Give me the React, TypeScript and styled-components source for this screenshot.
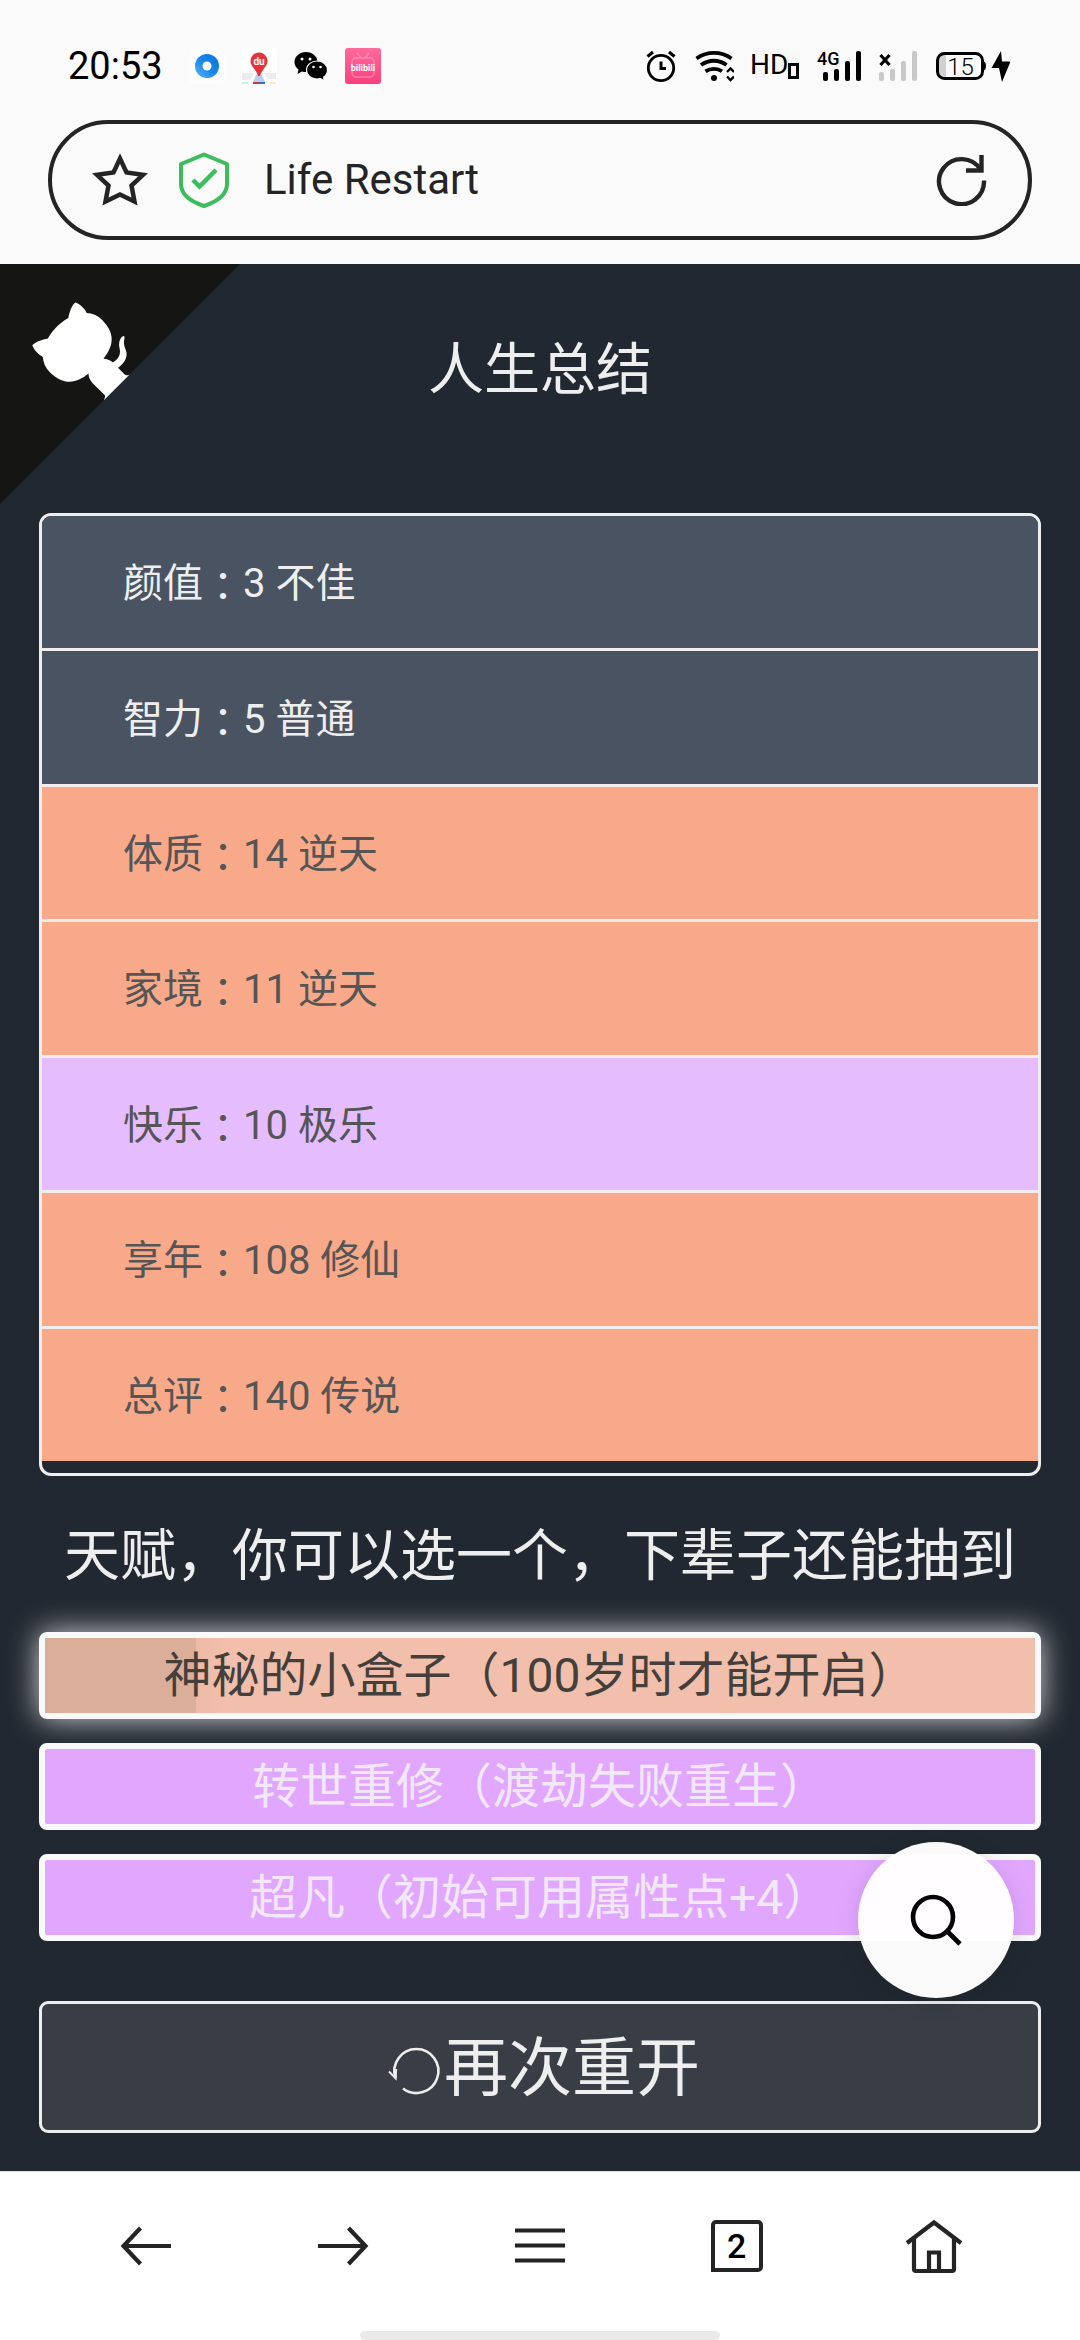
import React, { useState } from "react";
import styled, { createGlobalStyle } from "styled-components";

const GlobalStyle = createGlobalStyle`
  *, *::before, *::after { box-sizing: border-box; }
  body { margin: 0; background: #222831; }
  button { font: inherit; color: inherit; cursor: pointer; }
`;

const sans = `Roboto, "Noto Sans CJK SC", sans-serif`;

const Screen = styled.div`
  display: flex;
  flex-direction: column;
  min-height: 100vh;
  background: #222831;
  color: #eeeeee;
  font-family: ${sans};
`;

/* ---------- browser chrome ---------- */

const TopChrome = styled.header`
  background: #fafafa;
  color: #000000;
  padding: 48px 48px 24px;
`;

const StatusBar = styled.div`
  display: flex;
  justify-content: space-between;
  align-items: center;
  height: 36px;
  padding: 0 22px 0 20px;
`;

const StatusGroup = styled.div`
  display: flex;
  align-items: center;
  gap: 16px;
`;

const Clock = styled.time`
  font-size: 38px;
  line-height: 36px;
  margin-right: 10px;
`;

const HdMark = styled.span`
  display: flex;
  align-items: flex-end;
  width: 50px;
  height: 36px;
  padding-bottom: 5px;
  font-size: 28px;
  line-height: 28px;
`;

const HdBox = styled.i`
  flex: none;
  width: 11px;
  height: 16px;
  border: 3px solid #000000;
`;

const AddressBar = styled.form`
  display: flex;
  align-items: center;
  height: 120px;
  margin-top: 36px;
  padding: 0 40px;
  border: 4px solid #242424;
  border-radius: 60px;
  color: #242424;
`;

const IconButton = styled.button`
  display: flex;
  align-items: center;
  justify-content: center;
  padding: 0;
  border: 0;
  background: none;
`;

const ShieldButton = styled(IconButton)`
  margin: 0 34px 0 30px;
`;

const AddressInput = styled.input`
  flex: 1;
  min-width: 0;
  padding: 0;
  border: 0;
  outline: 0;
  background: none;
  color: #242424;
  font-family: ${sans};
  font-size: 42px;
  line-height: 56px;
`;

/* ---------- game summary ---------- */

const Game = styled.main`
  position: relative;
  display: flex;
  flex-direction: column;
  flex: 1;
  padding: 0 39px 38px;
`;

const CornerLink = styled.a`
  position: absolute;
  top: 0;
  left: 0;
  color: #ffffff;
  svg { display: block; }
`;

const Title = styled.h1`
  margin: 0;
  padding: 66px 0 103px;
  font-size: 56px;
  font-weight: 400;
  line-height: 80px;
  text-align: center;
`;

const StatList = styled.ul`
  display: grid;
  grid-auto-rows: 1fr;
  gap: 3px;
  min-height: 963px;
  margin: 0;
  padding: 0 0 12px;
  list-style: none;
  border: 3px solid #eeeeee;
  border-radius: 12px;
  overflow: hidden;
`;

type Grade = "plain" | "purple" | "orange";

const rowColors: Record<Grade, string> = {
  plain: "background: #4a5361; color: #eeeeee;",
  purple: "background: #e5bdff; color: #555555;",
  orange: "background: #f7a98a; color: #555555;",
};

const StatRow = styled.li<{ $grade: Grade }>`
  display: flex;
  align-items: center;
  padding: 4px 81px 0;
  font-size: 40px;
  line-height: 60px;
  white-space: pre;
  ${(p) => rowColors[p.$grade]}
  & + & { box-shadow: 0 -3px 0 #f2ecec; }
`;

const Colon = styled.span`
  font-family: "Noto Sans CJK JP", sans-serif;
`;

const Prompt = styled.h2`
  margin: 0;
  padding: 40px 0 36px;
  font-size: 56px;
  font-weight: 400;
  line-height: 80px;
  text-align: center;
`;

const TalentList = styled.div`
  display: flex;
  flex-direction: column;
  gap: 24px;
`;

const Talent = styled.button<{ $selected: boolean; $grade: Grade }>`
  height: 87px;
  padding: 1px 0 0;
  border: 6px solid #f9f9f9;
  border-radius: 8px;
  background: ${(p) => (p.$grade === "orange" ? "#f1bfac" : "#e1a7ff")};
  color: ${(p) => (p.$grade === "orange" ? "#443f3a" : "#f2e8fa")};
  font-size: 48px;
  line-height: 72px;
  ${(p) =>
    p.$selected &&
    `background: linear-gradient(90deg, #dbae9a 151px, #eebaa7 151px, #f1bfac 180px) padding-box;
     box-shadow: 0 0 30px rgba(255, 255, 255, 0.8);`}
`;

const RestartButton = styled.button`
  display: flex;
  align-items: center;
  justify-content: center;
  height: 132px;
  margin-top: 60px;
  padding: 4px 0 0;
  border: 3px solid #eeeeee;
  border-radius: 9px;
  background: #393e46;
  color: #eeeeee;
  font-size: 64px;
  line-height: 96px;
`;

const SearchFab = styled.button`
  position: absolute;
  right: 66px;
  bottom: 173px;
  display: flex;
  align-items: center;
  justify-content: center;
  width: 156px;
  height: 156px;
  padding: 0;
  border: 0;
  border-radius: 50%;
  background: rgba(255, 255, 255, 0.98);
  box-shadow: 0 3px 24px rgba(0, 0, 0, 0.12);
  color: #000000;
`;

/* ---------- bottom navigation ---------- */

const BottomNav = styled.nav`
  display: flex;
  flex-direction: column;
  align-items: center;
  justify-content: space-between;
  height: 169px;
  border-top: 1px solid #dddddd;
  background: #ffffff;
`;

const NavRow = styled.div`
  display: flex;
  width: 100%;
  padding: 38px 48px 0;
`;

const NavButton = styled(IconButton)`
  flex: 1;
  height: 72px;
  color: #242424;
`;

const TabCount = styled.span`
  width: 52px;
  height: 52px;
  border: 4px solid #242424;
  border-radius: 5px 5px 5px 0;
  color: #000000;
  font-size: 34px;
  font-weight: 500;
  line-height: 44px;
`;

const HomeIndicator = styled.div`
  width: 360px;
  height: 9px;
  border-radius: 5px;
  background: #e9e9e9;
`;

/* ---------- icons ---------- */

const BrowserAppIcon = () => (
  <svg width="36" height="36" viewBox="0 0 36 36" aria-hidden="true">
    <defs>
      <linearGradient id="ring" x1="1" y1="0" x2="0" y2="1">
        <stop offset="0" stopColor="#0a6fe0" />
        <stop offset="0.5" stopColor="#1787ea" />
        <stop offset="1" stopColor="#58b4f5" />
      </linearGradient>
    </defs>
    <rect width="36" height="36" rx="4" fill="#fcfcfc" />
    <circle cx="18" cy="18" r="12" fill="url(#ring)" />
    <circle cx="18" cy="18" r="4.5" fill="#fff" />
  </svg>
);

const MapAppIcon = () => (
  <svg width="36" height="36" viewBox="0 0 36 36" aria-hidden="true">
    <rect width="36" height="36" rx="3" fill="#fff" />
    <path d="M1 25h12l-4 7H1zM23 25h12v6h-8z" fill="#ececec" />
    <path d="M1 34h6v2H1z" fill="#cdeee6" />
    <path d="M29 34h6v2h-6z" fill="#fbe9b6" />
    <path d="M15 27h6l3 7H12z" fill="#b9cdee" />
    <path d="M12 34h6v2h-6z" fill="#d9363a" />
    <path d="M18 34h6v2h-6z" fill="#2f6fd6" />
    <path d="M18 4.500a8.500 8.500 0 0 1 8.500 8.500c0 5.500-5.500 8-7.500 15h-2c-2-7-7.500-9.500-7.500-15A8.500 8.500 0 0 1 18 4.500z" fill="#e6323a" />
    <text x="18" y="17" textAnchor="middle" fontFamily="Roboto, sans-serif" fontSize="10" fontWeight="700" fill="#fff">du</text>
  </svg>
);

const ChatAppIcon = () => (
  <svg width="36" height="36" viewBox="0 0 36 36" aria-hidden="true">
    <path d="M13 4C6.500 4 1.500 8.500 1.500 14c0 3 1.500 5.500 4 7.500L4.500 26l4.500-2.500c1.300.4 2.600.5 4 .5 6.500 0 11.500-4.500 11.500-10S19.500 4 13 4z" />
    <path d="M24 13c-5.800 0-10.500 4-10.500 9s4.700 9 10.500 9c1.200 0 2.300-.2 3.400-.5L31.500 33l-1-3.700c2.400-1.700 4-4.300 4-7.300 0-5-4.700-9-10.500-9z" stroke="#fafafa" strokeWidth="1.200" />
    <g fill="#fafafa">
      <circle cx="9" cy="11" r="1.500" />
      <circle cx="17" cy="11" r="1.500" />
      <circle cx="20.500" cy="19" r="1.300" />
      <circle cx="27.500" cy="19" r="1.300" />
    </g>
  </svg>
);

const VideoAppIcon = () => (
  <svg width="36" height="36" viewBox="0 0 36 36" aria-hidden="true">
    <defs>
      <linearGradient id="pink" x1="0" y1="0" x2="0" y2="1">
        <stop offset="0" stopColor="#fd6a9c" />
        <stop offset="1" stopColor="#fb3f7c" />
      </linearGradient>
    </defs>
    <rect width="36" height="36" rx="3" fill="url(#pink)" />
    <g fill="none" stroke="#fb9dbd" strokeWidth="1.500" opacity="0.7">
      <rect x="7" y="10" width="22" height="19" rx="4" />
      <path d="M12 5l4 5M24 5l-4 5" />
    </g>
    <text x="18" y="23" textAnchor="middle" fontFamily="Roboto, sans-serif" fontSize="9" fontWeight="700" fill="#fff">bilibili</text>
  </svg>
);

const AlarmIcon = () => (
  <svg width="32" height="36" viewBox="0 0 32 36" fill="none" stroke="#000" aria-hidden="true">
    <circle cx="17" cy="20" r="12.700" strokeWidth="2.800" />
    <path d="M17 13.500V20.500H22" strokeWidth="3" />
    <path d="M3.500 8.500L9 4M30.500 8.500L25 4" strokeWidth="3.200" />
  </svg>
);

const WifiIcon = () => (
  <svg width="42" height="36" viewBox="0 0 42 36" fill="none" stroke="#000" aria-hidden="true">
    <path d="M4.500 10.500C15 3 29 3 39.500 10.500" strokeWidth="3.800" />
    <path d="M9 17C17 11.300 27 11.300 34.500 17" strokeWidth="3.800" />
    <path d="M13.500 23.300C18.500 20 25.500 20 30 23.300" strokeWidth="3.800" />
    <circle cx="22" cy="30" r="3" fill="#000" stroke="none" />
    <path d="M35 24l3.500-3.500L42 24M35 28.500l3.500 3.500L42 28.500" strokeWidth="2.400" />
  </svg>
);

const SignalIcon = () => (
  <svg width="46" height="36" viewBox="0 0 46 36" aria-hidden="true">
    <text x="1" y="17" fontFamily="Roboto, sans-serif" fontSize="18" fontWeight="500">4G</text>
    <g>
      <rect x="7" y="24" width="5" height="9" rx="2" />
      <rect x="18" y="21" width="5" height="12" rx="2" />
      <rect x="29" y="13" width="5" height="20" rx="2" />
      <rect x="40" y="3" width="5" height="30" rx="2" />
    </g>
  </svg>
);

const NoSimIcon = () => (
  <svg width="42" height="36" viewBox="0 0 42 36" aria-hidden="true">
    <path d="M2.500 7l9 10M11.500 7l-9 10" stroke="#000" strokeWidth="3.200" />
    <g fill="#c8c8c8">
      <rect x="1" y="24" width="5" height="9" rx="2" />
      <rect x="12" y="21" width="5" height="12" rx="2" />
      <rect x="23" y="13" width="5" height="20" rx="2" />
      <rect x="34" y="3" width="5" height="30" rx="2" />
    </g>
  </svg>
);

const BatteryIcon = () => (
  <svg width="74" height="36" viewBox="0 0 74 36" aria-hidden="true">
    <path d="M3 10a6 6 0 0 1 6-6h1v28H9a6 6 0 0 1-6-6z" fill="#d0d0d0" />
    <rect x="1.500" y="5.500" width="45" height="25" rx="7" fill="none" stroke="#000" strokeWidth="3" />
    <path d="M47 13c4 1 4 9 0 10z" />
    <text x="24.500" y="26.500" textAnchor="middle" fontFamily="Roboto, sans-serif" fontSize="24" fontWeight="300">15</text>
    <path d="M65 3L55.500 20H63L66 34L74.500 13.500H66z" />
  </svg>
);

const StarIcon = () => (
  <svg width="56" height="56" viewBox="0 0 56 56" fill="none" stroke="currentColor" strokeWidth="4.500" aria-hidden="true">
    <path d="M28 6.500L34.500 20.500L51 22.800L39.500 33.500L42.500 49.500L28 42.500L13.500 49.500L16.500 33.500L5 22.800L21.500 20.500Z" />
  </svg>
);

const ShieldIcon = () => (
  <svg width="52" height="56" viewBox="0 0 52 56" fill="none" stroke="#3cbc5b" strokeWidth="4" strokeLinejoin="round" aria-hidden="true">
    <path d="M26 2.500L49 12V32C49 43 38 50 26 54C14 50 3 43 3 32V12Z" />
    <path d="M15 28L21.500 34.500L38 18" strokeWidth="4.500" strokeLinejoin="miter" />
  </svg>
);

const ReloadIcon = () => (
  <svg width="52" height="52" viewBox="0 0 52 52" fill="none" stroke="currentColor" strokeWidth="4.400" aria-hidden="true">
    <path d="M48 26.500A22.500 22.500 0 1 1 44.500 15.500" />
    <path d="M45.500 1V16.500H30" />
  </svg>
);

const CatCorner = () => (
  <svg width="240" height="240" viewBox="0 0 250 250" aria-hidden="true">
    <g transform="translate(250 0) scale(-1 1)">
      <path d="M0,0 L115,115 L130,115 L142,142 L250,250 L250,0 Z" fill="#151513" />
      <path
        d="M128.3,109.0 C113.8,99.7 119.0,89.6 119.0,89.6 C122.0,82.7 120.5,78.6 120.5,78.6 C119.2,72.0 123.4,76.3 123.4,76.3 C127.3,80.9 125.5,87.3 125.5,87.3 C122.9,97.6 130.6,101.9 134.4,103.2"
        fill="currentColor"
      />
      <path
        d="M115.0,115.0 C114.9,115.1 118.7,116.5 119.8,115.4 L133.7,101.6 C136.9,99.2 139.9,98.4 142.2,98.6 C133.8,88.0 127.5,74.4 143.8,58.0 C148.5,53.4 154.0,51.2 159.7,51.0 C160.3,49.4 163.2,43.6 171.4,40.1 C171.4,40.1 176.1,42.5 178.8,56.2 C183.1,58.6 187.2,61.8 190.9,65.4 C194.5,69.0 197.7,73.2 200.1,77.6 C213.8,80.2 216.3,84.9 216.3,84.9 C212.7,93.1 206.9,96.0 205.4,96.6 C205.1,102.4 203.0,107.8 198.3,112.5 C181.9,128.9 168.3,122.5 157.7,114.1 C157.9,116.9 156.7,120.9 152.7,124.9 L141.0,136.5 C139.8,137.7 141.6,141.9 141.8,141.8 Z"
        fill="currentColor"
      />
    </g>
  </svg>
);

const AgainIcon = () => (
  <svg width="64" height="64" viewBox="0 0 64 64" fill="none" stroke="currentColor" strokeWidth="2.600" aria-hidden="true">
    <path d="M23 51.500A22 22 0 1 0 15.500 41" />
    <path d="M9 34.500L15.700 41.500L16.200 32" strokeWidth="2" />
  </svg>
);

const SearchIcon = () => (
  <svg width="56" height="56" viewBox="0 0 56 56" fill="none" stroke="currentColor" strokeWidth="4.600" aria-hidden="true">
    <circle cx="25" cy="25" r="20" />
    <path d="M39.500 39.500L52 52" />
  </svg>
);

const BackIcon = () => (
  <svg width="52" height="44" viewBox="0 0 52 44" fill="none" stroke="currentColor" strokeWidth="4.200" aria-hidden="true">
    <path d="M51 22H4M20.500 4L3.500 22L20.500 40" />
  </svg>
);

const ForwardIcon = () => (
  <svg width="52" height="44" viewBox="0 0 52 44" fill="none" stroke="currentColor" strokeWidth="4.200" aria-hidden="true">
    <path d="M1 22H48M31.500 4L48.500 22L31.500 40" />
  </svg>
);

const MenuIcon = () => (
  <svg width="50" height="44" viewBox="0 0 50 44" fill="none" stroke="currentColor" strokeWidth="4.200" aria-hidden="true">
    <path d="M0 6.500H50M0 21.500H50M0 36.500H50" />
  </svg>
);

const HomeIcon = () => (
  <svg width="58" height="56" viewBox="0 0 58 56" fill="none" stroke="currentColor" strokeWidth="4.200" aria-hidden="true">
    <path d="M2 25L29 4.500L56 25" />
    <path d="M9 20V51Q9 53 11 53H47Q49 53 49 51V20" />
    <path d="M24 53V34.500H34V53" />
  </svg>
);

/* ---------- data ---------- */

const stats: { label: string; value: string; grade: Grade }[] = [
  { label: "颜值", value: "3 不佳", grade: "plain" },
  { label: "智力", value: "5 普通", grade: "plain" },
  { label: "体质", value: "14 逆天", grade: "orange" },
  { label: "家境", value: "11 逆天", grade: "orange" },
  { label: "快乐", value: "10 极乐", grade: "purple" },
  { label: "享年", value: "108 修仙", grade: "orange" },
  { label: "总评", value: "140 传说", grade: "orange" },
];

const talents: { text: string; grade: Grade }[] = [
  { text: "神秘的小盒子（100岁时才能开启）", grade: "orange" },
  { text: "转世重修（渡劫失败重生）", grade: "purple" },
  { text: "超凡（初始可用属性点+4）", grade: "purple" },
];

export default function App() {
  const [selected, setSelected] = useState(0);
  const [address, setAddress] = useState("Life Restart");

  return (
    <Screen lang="zh-CN">
      <GlobalStyle />
      <TopChrome>
        <StatusBar>
          <StatusGroup>
            <Clock>20:53</Clock>
            <BrowserAppIcon />
            <MapAppIcon />
            <ChatAppIcon />
            <VideoAppIcon />
          </StatusGroup>
          <StatusGroup>
            <AlarmIcon />
            <WifiIcon />
            <HdMark>HD<HdBox /></HdMark>
            <SignalIcon />
            <NoSimIcon />
            <BatteryIcon />
          </StatusGroup>
        </StatusBar>
        <AddressBar onSubmit={(e) => e.preventDefault()}>
          <IconButton type="button" aria-label="收藏"><StarIcon /></IconButton>
          <ShieldButton type="button" aria-label="安全"><ShieldIcon /></ShieldButton>
          <AddressInput
            type="text"
            aria-label="地址"
            value={address}
            onChange={(e) => setAddress(e.target.value)}
          />
          <IconButton type="button" aria-label="刷新"><ReloadIcon /></IconButton>
        </AddressBar>
      </TopChrome>

      <Game>
        <CornerLink href="#" aria-label="GitHub"><CatCorner /></CornerLink>
        <Title>人生总结</Title>
        <StatList>
          {stats.map((s) => (
            <StatRow key={s.label} $grade={s.grade}>
              {s.label}<Colon>：</Colon>{s.value}
            </StatRow>
          ))}
        </StatList>
        <Prompt>天赋，你可以选一个，下辈子还能抽到</Prompt>
        <TalentList>
          {talents.map((t, i) => (
            <Talent
              key={t.text}
              type="button"
              $grade={t.grade}
              $selected={i === selected}
              aria-pressed={i === selected}
              onClick={() => setSelected(i)}
            >
              {t.text}
            </Talent>
          ))}
        </TalentList>
        <RestartButton type="button"><AgainIcon />再次重开</RestartButton>
        <SearchFab type="button" aria-label="搜索"><SearchIcon /></SearchFab>
      </Game>

      <BottomNav>
        <NavRow>
          <NavButton type="button" aria-label="后退"><BackIcon /></NavButton>
          <NavButton type="button" aria-label="前进"><ForwardIcon /></NavButton>
          <NavButton type="button" aria-label="菜单"><MenuIcon /></NavButton>
          <NavButton type="button"><TabCount>2</TabCount></NavButton>
          <NavButton type="button" aria-label="主页"><HomeIcon /></NavButton>
        </NavRow>
        <HomeIndicator />
      </BottomNav>
    </Screen>
  );
}
